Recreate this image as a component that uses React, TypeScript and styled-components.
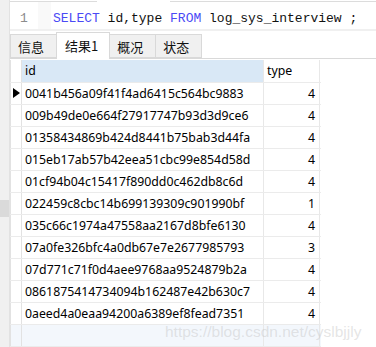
import React from "react";
import styled, { createGlobalStyle } from "styled-components";

type Record = {
  id: string;
  type: number;
};

const rows: Record[] = [
  { id: "0041b456a09f41f4ad6415c564bc9883", type: 4 },
  { id: "009b49de0e664f27917747b93d3d9ce6", type: 4 },
  { id: "01358434869b424d8441b75bab3d44fa", type: 4 },
  { id: "015eb17ab57b42eea51cbc99e854d58d", type: 4 },
  { id: "01cf94b04c15417f890dd0c462db8c6d", type: 4 },
  { id: "022459c8cbc14b699139309c901990bf", type: 1 },
  { id: "035c66c1974a47558aa2167d8bfe6130", type: 4 },
  { id: "07a0fe326bfc4a0db67e7e2677985793", type: 3 },
  { id: "07d771c71f0d4aee9768aa9524879b2a", type: 4 },
  { id: "0861875414734094b162487e42b630c7", type: 4 },
  { id: "0aeed4a0eaa94200a6389ef8fead7351", type: 4 },
];

const tabs = ["信息", "结果1", "概况", "状态"];

const GlobalStyle = createGlobalStyle`
  body {
    margin: 0;
    background: #fff;
    font-family: "Noto Sans", "Noto Sans CJK SC", sans-serif;
  }
`;

const Page = styled.div`
  position: relative;
  display: flex;
  width: 376px;
  height: 347px;
  overflow: hidden;
  background: #fff;
`;

const LeftStrip = styled.div`
  display: flex;
  flex-direction: column;
  width: 9px;
  flex-shrink: 0;
  background: #f0f0f0;
  border-right: 1px solid #e2e2e2;
`;

const Grip = styled.div`
  margin-top: 200px;
  height: 17px;
  background: #dadada;
`;

const Main = styled.div`
  display: flex;
  flex-direction: column;
  flex: 1;
`;

const TopEdge = styled.div`
  display: flex;
  height: 3px;
`;

const EdgePart = styled.div<{ $gap?: boolean; $w?: number }>`
  width: ${(p) => (p.$w ? `${p.$w}px` : "auto")};
  flex: ${(p) => (p.$w ? "none" : 1)};
  border-bottom: 1px solid ${(p) => (p.$gap ? "transparent" : "#dcdcdc")};
`;

const Editor = styled.div`
  display: flex;
  height: 43px;
`;

const Gutter = styled.div`
  width: 28px;
  padding-top: 9px;
  text-align: center;
  font-family: "Liberation Mono", monospace;
  font-size: 13px;
  color: #8c8c8c;
`;

const FoldMargin = styled.div`
  width: 13px;
  background: #f9f9f9;
`;

const Code = styled.div`
  padding: 9px 0 0 2px;
  font-family: "Liberation Mono", monospace;
  font-size: 13px;
  color: #111;
  white-space: pre;
`;

const Keyword = styled.span`
  color: #4a4af5;
`;

const EditorBottom = styled.div`
  height: 3px;
  background: #f0f0f0;
  margin-bottom: 1px;
`;

const TabBar = styled.div`
  display: flex;
  align-items: flex-end;
  height: 27px;
  padding-left: 1px;
  border-bottom: 1px solid #d9d9d9;
  box-sizing: border-box;
`;

const Tab = styled.div<{ $active?: boolean }>`
  display: flex;
  align-items: center;
  box-sizing: border-box;
  height: ${(p) => (p.$active ? 27 : 24)}px;
  margin-bottom: ${(p) => (p.$active ? -1 : 0)}px;
  padding: ${(p) => (p.$active ? "0 11px 0 8px" : "1px 12px 0 7px")};
  background: ${(p) => (p.$active ? "#fff" : "#f0f0f0")};
  border: 1px solid #d9d9d9;
  border-bottom: ${(p) => (p.$active ? "none" : "1px solid #d9d9d9")};
  margin-left: -1px;
  font-family: "Noto Sans CJK SC", sans-serif;
  font-size: 13px;
  color: #111;
`;

const Grid = styled.div`
  display: flex;
  flex-direction: column;
  width: 311px;
  margin-top: 1px;
`;

const Row = styled.div<{ $header?: boolean; $tint?: boolean }>`
  display: grid;
  grid-template-columns: 12px 242px 56px;
  height: ${(p) => (p.$header ? 23 : 22)}px;
  box-sizing: border-box;
  border-bottom: 1px solid #ebebeb;
  background: ${(p) => (p.$tint ? "#f3f7fc" : "#fff")};
  font-size: 12.3px;
  color: #000;
`;

const Marker = styled.div`
  display: flex;
  align-items: center;
  justify-content: center;
  border-left: 1px solid #e2e2e2;
  border-right: 1px solid #e2e2e2;
`;

const Cell = styled.div<{ $num?: boolean; $selected?: boolean }>`
  display: flex;
  align-items: center;
  justify-content: ${(p) => (p.$num ? "flex-end" : "flex-start")};
  padding: ${(p) => (p.$num ? "0 4px 0 0" : "0 0 0 3px")};
  border-right: 1px solid #e8e8e8;
  background: ${(p) => (p.$selected ? "#d9e8f6" : "transparent")};
  white-space: nowrap;
  overflow: hidden;
`;

const Watermark = styled.div`
  position: absolute;
  left: 165px;
  top: 323px;
  font-family: "Liberation Sans", sans-serif;
  font-size: 15.5px;
  color: rgba(190, 190, 190, 0.4);
  pointer-events: none;
`;

const Pointer = () => (
  <svg width="7" height="10" viewBox="0 0 7 10">
    <path d="M0 0 L7 5 L0 10 Z" fill="#000" />
  </svg>
);

export default function App() {
  return (
    <Page>
      <GlobalStyle />
      <LeftStrip>
        <Grip />
      </LeftStrip>
      <Main>
        <TopEdge>
          <EdgePart $w={87} />
          <EdgePart $w={73} $gap />
          <EdgePart />
        </TopEdge>
        <Editor>
          <Gutter>1</Gutter>
          <FoldMargin />
          <Code>
            <Keyword>SELECT</Keyword> id,type <Keyword>FROM</Keyword> log_sys_interview ;
          </Code>
        </Editor>
        <EditorBottom />
        <TabBar>
          {tabs.map((t, i) => (
            <Tab key={t} $active={i === 1}>
              {t}
            </Tab>
          ))}
        </TabBar>
        <Grid>
          <Row $header>
            <Marker />
            <Cell $selected>id</Cell>
            <Cell>type</Cell>
          </Row>
          {rows.map((r, i) => (
            <Row key={r.id}>
              <Marker>{i === 0 && <Pointer />}</Marker>
              <Cell>{r.id}</Cell>
              <Cell $num>{r.type}</Cell>
            </Row>
          ))}
          <Row $tint>
            <Marker />
            <Cell />
            <Cell />
          </Row>
        </Grid>
      </Main>
      <Watermark>https://blog.csdn.net/cyslbjjly</Watermark>
    </Page>
  );
}
